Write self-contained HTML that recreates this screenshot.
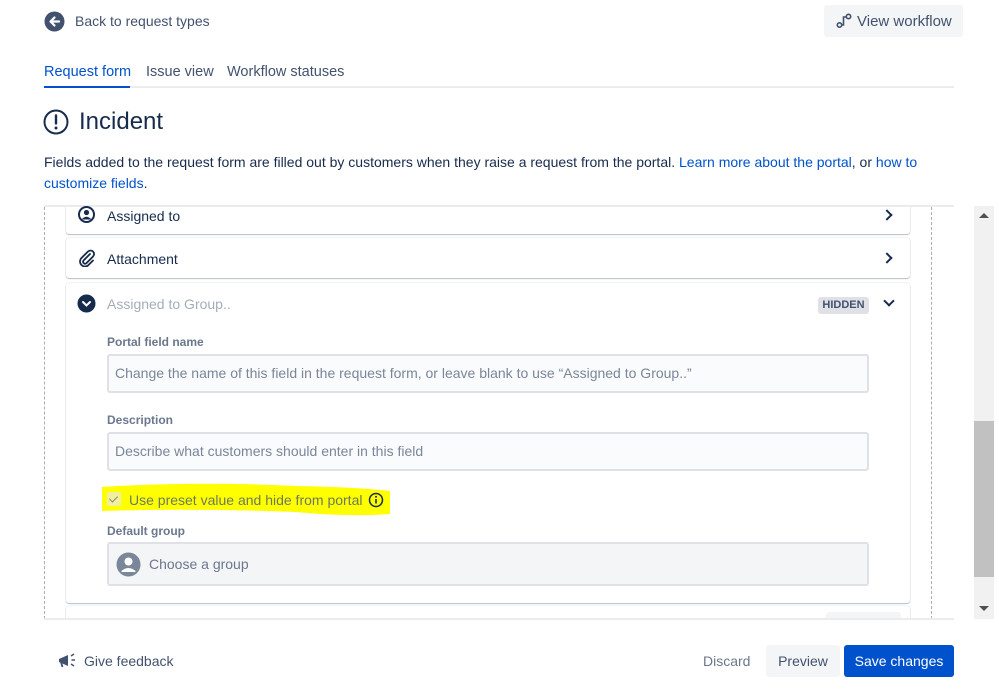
<!DOCTYPE html>
<html><head><meta charset="utf-8"><style>
*{box-sizing:border-box;margin:0;padding:0}
body{width:999px;height:696px;background:#fff;font-family:"Liberation Sans",sans-serif;color:#172b4d;position:relative;overflow:hidden;font-size:14px}
.a{position:absolute}
.card{position:absolute;left:66px;width:844px;background:#fff;border-radius:3px;box-shadow:0 1px 1px rgba(9,30,66,.25),0 0 1px rgba(9,30,66,.31)}
.lbl{position:absolute;left:107px;font-size:12px;font-weight:bold;color:#6b778c}
.inp{position:absolute;left:107px;width:762px;border:2px solid #dfe1e6;background:#fafbfc;border-radius:3px;color:#7a869a;font-size:14px;padding-left:6px}
.chev{position:absolute;width:8px;height:8px;border-right:2px solid #172b4d;border-bottom:2px solid #172b4d}
</style></head><body>
<svg class="a" style="left:44px;top:11px" width="21" height="21"><circle cx="10.5" cy="10.5" r="10" fill="#42526e"/><path d="M15 10.5H7M10.5 6.5L6.5 10.5L10.5 14.5" stroke="#fff" stroke-width="2.2" fill="none" stroke-linecap="round" stroke-linejoin="round"/></svg>
<div class="a" style="left:75px;top:13px;color:#42526e">Back to request types</div>
<div class="a" style="left:824px;top:5px;width:139px;height:32px;background:#f4f5f7;border-radius:3px"></div>
<svg class="a" style="left:836px;top:13px" width="16" height="16"><circle cx="3.5" cy="12" r="2.2" stroke="#42526e" stroke-width="1.6" fill="none"/><circle cx="12.5" cy="3.5" r="2.2" stroke="#42526e" stroke-width="1.6" fill="none"/><path d="M5.5 12H7.5V4H10.5" stroke="#42526e" stroke-width="1.6" fill="none"/></svg>
<div class="a" style="left:857px;top:13px;font-size:15px;color:#42526e">View workflow</div>
<div class="a" style="left:44px;top:64px;color:#0052cc;font-size:14.5px">Request form</div>
<div class="a" style="left:146px;top:64px;color:#42526e;font-size:14.5px">Issue view</div>
<div class="a" style="left:227px;top:64px;color:#42526e;font-size:14.5px">Workflow statuses</div>
<div class="a" style="left:44px;top:86px;width:910px;height:2px;background:#ebecf0"></div>
<div class="a" style="left:44px;top:86px;width:86px;height:2px;background:#0052cc"></div>
<svg class="a" style="left:43px;top:109px" width="26" height="26"><circle cx="13" cy="13" r="11.5" stroke="#172b4d" stroke-width="2" fill="none"/><path d="M13 6.5V14.5" stroke="#172b4d" stroke-width="2.4" stroke-linecap="round"/><circle cx="13" cy="19" r="1.5" fill="#172b4d"/></svg>
<div class="a" style="left:79px;top:108px;font-size:24px;color:#172b4d">Incident</div>
<div class="a" style="left:44px;top:152px;width:910px;line-height:21px">Fields added to the request form are filled out by customers when they raise a request from the portal. <span style="color:#0052cc">Learn more about the portal</span>, or <span style="color:#0052cc">how to customize fields</span>.</div>
<div class="a" style="left:44px;top:207px;width:888px;height:412px;border-left:1px dashed #a5adba;border-right:1px dashed #a5adba"></div>
<div class="a" style="left:974px;top:206px;width:20px;height:413px;background:#f1f1f1"></div>
<div class="a" style="left:974px;top:421px;width:20px;height:156px;background:#c1c1c1"></div>
<div class="a" style="left:979px;top:213px;border-left:5px solid transparent;border-right:5px solid transparent;border-bottom:5px solid #505050"></div>
<div class="a" style="left:979px;top:606px;border-left:5px solid transparent;border-right:5px solid transparent;border-top:5px solid #505050"></div>
<div class="card" style="top:196px;height:38px"></div>
<div class="a" style="left:44px;top:193px;width:910px;height:12px;background:#fff"></div>
<div class="a" style="left:44px;top:205px;width:910px;height:2px;background:#ebecf0"></div>
<svg class="a" style="left:78px;top:206px" width="17" height="17"><circle cx="8.5" cy="8.5" r="7.5" stroke="#172b4d" stroke-width="2" fill="none"/><circle cx="8.5" cy="6.5" r="2.6" fill="#172b4d"/><path d="M3.5 13.5Q8.5 8 13.5 13.5" fill="#172b4d"/></svg>
<div class="a" style="left:107px;top:208px">Assigned to</div>
<div class="chev" style="left:883px;top:211px;transform:rotate(-45deg)"></div>
<div class="card" style="top:238px;height:40px"></div>
<svg class="a" style="left:78px;top:249px" width="18" height="18"><path d="M12 5L5.5 11.5a2 2 0 0 0 2.8 2.8L15 7.5a3.5 3.5 0 0 0-5-5L3 9.5a5 5 0 0 0 7 7l5-5" stroke="#172b4d" stroke-width="1.8" fill="none" stroke-linecap="round"/></svg>
<div class="a" style="left:107px;top:251px">Attachment</div>
<div class="chev" style="left:883px;top:254px;transform:rotate(-45deg)"></div>
<div class="card" style="top:283px;height:320px"></div>
<svg class="a" style="left:77px;top:294px" width="19" height="19"><circle cx="9.5" cy="9.5" r="9" fill="#172b4d"/><path d="M6 8L9.5 11.5L13 8" stroke="#fff" stroke-width="2" fill="none" stroke-linecap="round"/></svg>
<div class="a" style="left:107px;top:296px;color:#a5adba">Assigned to Group..</div>
<div class="a" style="left:818px;top:297px;width:51px;height:17px;background:#dfe1e6;border-radius:3px;font-size:11px;font-weight:bold;color:#42526e;text-align:center;line-height:17px">HIDDEN</div>
<div class="chev" style="left:885px;top:297px;transform:rotate(45deg)"></div>
<div class="lbl" style="top:335px">Portal field name</div>
<div class="inp" style="top:354px;height:39px;line-height:35px">Change the name of this field in the request form, or leave blank to use “Assigned to Group..”</div>
<div class="lbl" style="top:413px">Description</div>
<div class="inp" style="top:432px;height:39px;line-height:35px">Describe what customers should enter in this field</div>
<svg class="a" style="left:96px;top:481px" width="300" height="38"><path d="M6 6Q100 0 200 5Q260 6 294 10L294 33Q250 36 200 31Q100 27 6 30Z" fill="#ffff00"/></svg>
<div class="a" style="left:107px;top:492px;width:14px;height:14px;background:#f0f0a0;border-radius:2px"></div>
<div class="a" style="left:111px;top:494px;width:5px;height:8px;border-right:1.5px solid #8a8a6a;border-bottom:1.5px solid #8a8a6a;transform:rotate(45deg)"></div>
<div class="a" style="left:129px;top:492px;color:#6b7a5c">Use preset value and hide from portal</div>
<svg class="a" style="left:368px;top:492px" width="16" height="16"><circle cx="8" cy="8" r="6.5" stroke="#172b4d" stroke-width="1.5" fill="none"/><path d="M8 7V11.5" stroke="#172b4d" stroke-width="1.6"/><circle cx="8" cy="4.8" r="1" fill="#172b4d"/></svg>
<div class="lbl" style="top:524px">Default group</div>
<div class="inp" style="top:542px;height:44px;background:#f4f5f7;padding-left:40px;line-height:40px;color:#6b778c">Choose a group</div>
<svg class="a" style="left:116px;top:552px" width="25" height="25"><circle cx="12.5" cy="12.5" r="12" fill="#7a869a"/><circle cx="12.5" cy="9.5" r="4" fill="#fff"/><path d="M5.5 19Q12.5 13 19.5 19V20H5.5Z" fill="#fff"/></svg>
<div class="card" style="top:606px;height:20px"></div>
<div class="a" style="left:826px;top:612px;width:75px;height:8px;background:#f4f5f7;border-radius:3px"></div>
<div class="a" style="left:44px;top:620px;width:930px;height:76px;background:#fff"></div>
<div class="a" style="left:44px;top:618px;width:910px;height:2px;background:#ebecf0"></div>
<svg class="a" style="left:57px;top:652px" width="22" height="18"><path d="M2 7L11 3V14L2 10Z" fill="#42526e"/><path d="M4 10L5.5 15" stroke="#42526e" stroke-width="1.8"/><path d="M14 4L17 2M14.5 8H18M14 12L17 14" stroke="#42526e" stroke-width="1.5"/></svg>
<div class="a" style="left:84px;top:653px;color:#42526e">Give feedback</div>
<div class="a" style="left:703px;top:653px;color:#6b778c">Discard</div>
<div class="a" style="left:766px;top:645px;width:74px;height:32px;background:#f4f5f7;border-radius:3px;color:#42526e;text-align:center;line-height:32px">Preview</div>
<div class="a" style="left:844px;top:645px;width:110px;height:32px;background:#0052cc;border-radius:3px;color:#fff;text-align:center;line-height:32px">Save changes</div>
</body></html>
